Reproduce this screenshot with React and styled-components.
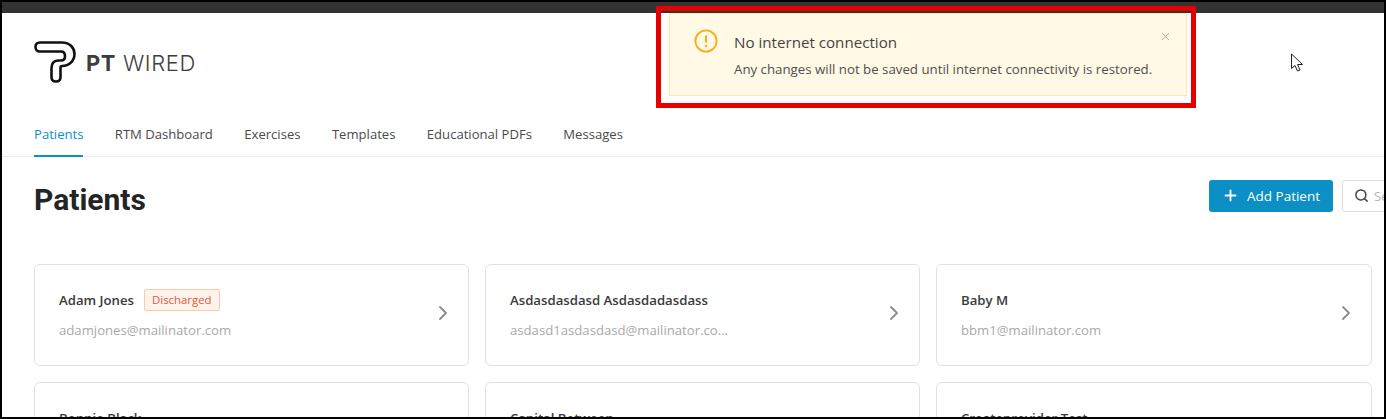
import styled, { createGlobalStyle } from "styled-components";
import { ChevronRight, Plus, Search, X } from "lucide-react";

const Global = createGlobalStyle`
  html, body { margin: 0; padding: 0; background: #000; }
  * { box-sizing: border-box; }
`;

const Frame = styled.div`
  position: relative;
  width: 1386px;
  height: 419px;
  border: 2px solid #000;
  background: #fff;
  overflow: hidden;
  font-family: "Open Sans", sans-serif;
  color: #333;
`;

const TopBar = styled.div`
  height: 11px;
  background: #333;
`;

const Header = styled.header`
  height: 144px;
  padding: 0 32px;
  display: flex;
  flex-direction: column;
  border-bottom: 1px solid #ececec;
`;

const Brand = styled.div`
  display: flex;
  align-items: center;
  gap: 10px;
  height: 44px;
  margin-top: 27px;
`;

const BrandName = styled.div`
  font-family: Inter, sans-serif;
  font-size: 22px;
  font-weight: 300;
  letter-spacing: 0.6px;
  color: #3d3d3d;
  margin-top: 2px;

  b {
    font-weight: 700;
  }
`;

const Tabs = styled.nav`
  display: flex;
  gap: 31.4px;
  margin-top: auto;
`;

const Tab = styled.a`
  height: 42px;
  padding-top: 10px;
  font-size: 13.1px;
  line-height: 18px;
  color: ${(p) => (p.$active ? "#0b8fc4" : "#4a4a4a")};
  border-bottom: 2px solid ${(p) => (p.$active ? "#0b8fc4" : "transparent")};
  margin-bottom: -1px;
`;

const Main = styled.main`
  width: 1400px;
  padding: 22px 0 0 32px;
`;

const TitleRow = styled.div`
  display: flex;
  align-items: center;
  height: 33px;
`;

const Title = styled.h1`
  flex: 0 0 1175px;
  margin: 8px 0 0;
  font-family: Roboto, sans-serif;
  font-size: 30px;
  font-weight: 700;
  color: #242424;
`;

const AddButton = styled.button`
  flex: none;
  width: 124px;
  height: 32px;
  border: 0;
  border-radius: 3px;
  background: #0b8fc4;
  color: #fff;
  font-family: inherit;
  font-size: 13.5px;
  white-space: nowrap;
  display: flex;
  align-items: center;
  justify-content: center;
  gap: 8px;
`;

const SearchBox = styled.div`
  flex: none;
  width: 120px;
  height: 32px;
  margin-left: 9px;
  padding-left: 11px;
  border: 1px solid #dcdcdc;
  border-radius: 3px;
  display: flex;
  align-items: center;
  gap: 5px;
  font-size: 13px;
  color: #b5b5b5;
`;

const Grid = styled.div`
  display: grid;
  grid-template-columns: 435px 435px 436px;
  gap: 16px;
  margin-top: 52px;
`;

const Card = styled.div`
  height: 102px;
  padding: 24px 24px 0 24px;
  border: 1px solid #e2e2e2;
  border-radius: 6px;
  display: flex;
  justify-content: space-between;
`;

const CardBody = styled.div`
  min-width: 0;
`;

const NameRow = styled.div`
  display: flex;
  align-items: center;
  gap: 10px;
  height: 22px;
`;

const Name = styled.span`
  font-size: 13.2px;
  font-weight: 600;
  color: #3a3a3a;
`;

const Badge = styled.span`
  height: 22px;
  padding: 0 7px;
  border: 1px solid #fcc9a9;
  border-radius: 2px;
  background: #fff3eb;
  color: #e2583a;
  font-size: 11.4px;
  line-height: 20px;
`;

const Email = styled.div`
  margin-top: 10px;
  width: 218px;
  font-size: 13.15px;
  line-height: 18px;
  color: #a9a9a9;
  white-space: nowrap;
  overflow: hidden;
  text-overflow: ellipsis;
`;

const Arrow = styled(ChevronRight)`
  margin: 12px -11px 0 0;
  color: #8c8c8c;
`;

const RedBox = styled.div`
  position: absolute;
  left: 654px;
  top: 4px;
  width: 540px;
  height: 102px;
  padding: 2px 4px 7px 8px;
  border: 5px solid #e60000;
  z-index: 2;
`;

const Alert = styled.div`
  position: relative;
  height: 83px;
  padding: 15px 0 0 24px;
  background: #fff9e5;
  border: 1px solid #fbe9b0;
  display: flex;
  gap: 16px;
`;

const AlertCopy = styled.div`
  margin-top: -1px;
`;

const AlertTitle = styled.div`
  font-size: 15.15px;
  line-height: 28px;
  color: #444;
`;

const AlertText = styled.div`
  margin-top: 4px;
  font-size: 13.27px;
  line-height: 18px;
  color: #4f4f4f;
  white-space: nowrap;
`;

const Close = styled(X)`
  position: absolute;
  right: 14px;
  top: 16px;
  color: #999;
`;

const Cursor = styled.svg`
  position: absolute;
  left: 1288px;
  top: 51px;
`;

const Logo = () => (
  <svg width="42" height="42" viewBox="0 0 42 42" fill="none">
    <path
      d="M6 1.5 H28 C36 1.5 40.5 7 40.5 13 C40.5 20 35 25 28 25 Q26.5 25 26.5 27 V36 Q26.5 40.5 22 40.5 Q17.5 40.5 17.5 36 V27 Q17.5 20 24 19.5 H27 Q31 19.5 31 15 Q31 10.5 27 10.5 H6 Q1.5 10.5 1.5 6 Q1.5 1.5 6 1.5 Z"
      stroke="#111"
      strokeWidth="2.6"
      strokeLinejoin="round"
    />
  </svg>
);

const WarnIcon = () => (
  <svg width="24" height="24" viewBox="0 0 24 24" fill="none">
    <circle cx="12" cy="12" r="10.6" stroke="#faad14" strokeWidth="1.8" />
    <path d="M12 6.5 V13.5" stroke="#faad14" strokeWidth="2" />
    <circle cx="12" cy="17" r="1.2" fill="#faad14" />
  </svg>
);

const patients = [
  { name: "Adam Jones", email: "adamjones@mailinator.com", discharged: true },
  { name: "Asdasdasdasd Asdasdadasdass", email: "asdasd1asdasdasd@mailinator.com" },
  { name: "Baby M", email: "bbm1@mailinator.com" },
  { name: "Bonnie Black", email: "bonnie@mailinator.com" },
  { name: "Capital Between", email: "capital@mailinator.com" },
  { name: "Createprovider Test", email: "createprovider@mailinator.com" },
];

const tabs = ["Patients", "RTM Dashboard", "Exercises", "Templates", "Educational PDFs", "Messages"];

export default function App() {
  return (
    <Frame>
      <Global />
      <TopBar />
      <Header>
        <Brand>
          <Logo />
          <BrandName>
            <b>PT</b> WIRED
          </BrandName>
        </Brand>
        <Tabs>
          {tabs.map((t, i) => (
            <Tab key={t} $active={i === 0}>
              {t}
            </Tab>
          ))}
        </Tabs>
      </Header>
      <Main>
        <TitleRow>
          <Title>Patients</Title>
          <AddButton>
            <Plus size={17} strokeWidth={2.6} />
            Add Patient
          </AddButton>
          <SearchBox>
            <Search size={15} strokeWidth={2.4} color="#444" />
            Search
          </SearchBox>
        </TitleRow>
        <Grid>
          {patients.map((p) => (
            <Card key={p.name}>
              <CardBody>
                <NameRow>
                  <Name>{p.name}</Name>
                  {p.discharged && <Badge>Discharged</Badge>}
                </NameRow>
                <Email>{p.email}</Email>
              </CardBody>
              <Arrow size={24} strokeWidth={1.8} />
            </Card>
          ))}
        </Grid>
      </Main>
      <RedBox>
        <Alert>
          <WarnIcon />
          <AlertCopy>
            <AlertTitle>No internet connection</AlertTitle>
            <AlertText>Any changes will not be saved until internet connectivity is restored.</AlertText>
          </AlertCopy>
          <Close size={13} strokeWidth={1.5} />
        </Alert>
      </RedBox>
      <Cursor width="14" height="20" viewBox="0 0 14 20" fill="#fff">
        <path d="M1.5 1 V15.5 L5 12.5 L7.5 18 L10 17 L7.5 11.5 H12.5 Z" stroke="#222" strokeWidth="1" />
      </Cursor>
    </Frame>
  );
}
